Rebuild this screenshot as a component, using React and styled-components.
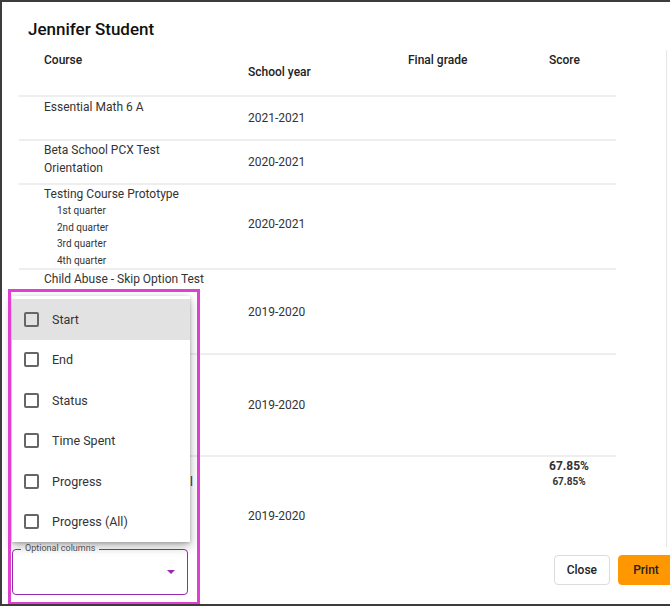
import React from "react";
import styled, { createGlobalStyle } from "styled-components";

const Global = createGlobalStyle`
  html, body { margin: 0; padding: 0; background: #fff; }
  * { box-sizing: border-box; }
  body { font-family: Roboto, "Liberation Sans", sans-serif; color: #222; }
`;

const Frame = styled.div`
  position: relative;
  width: 670px; height: 606px;
  border: 2px solid #3c3c3c;
  border-right: none;
  overflow: hidden;
  background: #fff;
  display: flex; flex-direction: column;
`;
const Title = styled.h2`
  margin: 15px 0 0 26px;
  font-size: 17px; font-weight: 500; height: 24px; line-height: 24px;
  color: #111;
`;
const Scroller = styled.div`
  flex: 1;
  margin-top: 9px;
  padding-left: 17px;
  border-right: 1px solid #e6e6e6;
  margin-right: 3px;
  overflow: hidden;
`;
const Row = styled.div`
  display: grid;
  grid-template-columns: 229px 160px 141px 67px;
  width: 597px;
  height: ${p => p.h}px;
  border-bottom: ${p => (p.last ? "none" : "2px solid #eeeeee")};
  font-size: 12px;
  color: #333;
`;
const Cell = styled.div`
  padding-left: ${p => (p.first ? 25 : 0)}px;
  padding-top: ${p => p.pt || 0}px;
  line-height: ${p => p.lh || 18}px;
  font-weight: ${p => (p.head ? 500 : 400)};
  color: ${p => (p.head ? "#222" : "#333")};
`;
const Sub = styled.div`
  font-size: 10px; line-height: 16.5px; padding-left: 13px;
`;
const Score = styled.div`
  font-weight: 700; font-size: ${p => p.s}px; line-height: 16px; text-align: center; width: 40px;
`;
const Footer = styled.div`
  height: 57px;
  display: flex; align-items: flex-start; justify-content: space-between;
  padding: 0 0 0 10px;
`;
const SelectBox = styled.div`
  position: relative;
  margin-top: 2px;
  width: 176px; height: 46px;
  border: 1.5px solid #9c27b0;
  border-radius: 4px;
`;
const SelectLabel = styled.span`
  position: absolute; top: -7px; left: 8px; padding: 0 4px; background: #fff;
  font-size: 9px; color: #555;
`;
const Arrow = styled.div`
  position: absolute; right: 12px; top: 20px;
  border-left: 4px solid transparent; border-right: 4px solid transparent;
  border-top: 4px solid #9c27b0;
`;
const Buttons = styled.div`
  display: flex; gap: 8px; margin-top: 8px; margin-right: -4px;
`;
const Button = styled.button`
  height: 30px; padding: 0 ${p => (p.primary ? 14 : 12)}px;
  font-family: Roboto, "Liberation Sans", sans-serif;
  font-size: 12px; font-weight: 500; color: #222;
  background: ${p => (p.primary ? "#ff9800" : "#fff")};
  border: 1px solid ${p => (p.primary ? "#ff9800" : "#dcdcdc")};
  border-radius: 4px;
  min-width: ${p => (p.primary ? 56 : 56)}px;
`;
const Highlight = styled.div`
  position: absolute; left: 6px; top: 287px; width: 192px; height: 316px;
  border: 3px solid #e040d0;
  pointer-events: none;
  z-index: 3;
`;
const Menu = styled.div`
  position: absolute; left: 10px; top: 294px; width: 178px; height: 246px;
  background: #fff;
  box-shadow: 0 4px 10px rgba(0,0,0,0.3), 0 1px 3px rgba(0,0,0,0.2);
  padding-top: 3px;
  z-index: 2;
`;
const Item = styled.div`
  height: 40.5px; display: flex; align-items: center; padding-left: 12px; gap: 13px;
  font-size: 12.5px; color: #333;
  background: ${p => (p.active ? "#e2e2e2" : "transparent")};
`;
const Box = styled.span`
  width: 15px; height: 15px; border: 2px solid #666; border-radius: 2px;
`;

const rows = [
  { h: 44, course: <Cell first pt={1}>Essential Math 6 A</Cell>, year: <Cell pt={12}>2021-2021</Cell> },
  { h: 44, course: <Cell first pt={0}>Beta School PCX Test<br />Orientation</Cell>, year: <Cell pt={12}>2020-2021</Cell> },
  {
    h: 85,
    course: (
      <Cell first pt={0}>
        Testing Course Prototype
        <Sub>1st quarter</Sub><Sub>2nd quarter</Sub><Sub>3rd quarter</Sub><Sub>4th quarter</Sub>
      </Cell>
    ),
    year: <Cell pt={30}>2020-2021</Cell>,
  },
  { h: 85, course: <Cell first pt={0}>Child Abuse - Skip Option Test</Cell>, year: <Cell pt={33}>2019-2020</Cell> },
  { h: 102, course: <Cell first />, year: <Cell pt={41}>2019-2020</Cell> },
  {
    h: 100, last: true,
    course: <Cell first pt={16}>Introduction to Ethics - Final</Cell>,
    year: <Cell pt={50}>2019-2020</Cell>,
    score: <Cell pt={1}><Score s={12}>67.85%</Score><Score s={10}>67.85%</Score></Cell>,
  },
];

const options = ["Start", "End", "Status", "Time Spent", "Progress", "Progress (All)"];

export default function App() {
  return (
    <>
      <Global />
      <Frame>
        <Title>Jennifer Student</Title>
        <Scroller>
          <Row h={47}>
            <Cell first head pt={1}>Course</Cell>
            <Cell head pt={13}>School year</Cell>
            <Cell head pt={1}>Final grade</Cell>
            <Cell head pt={1}>Score</Cell>
          </Row>
          {rows.map((r, i) => (
            <Row key={i} h={r.h} last={r.last}>
              {r.course}
              {r.year}
              <Cell />
              {r.score || <Cell />}
            </Row>
          ))}
        </Scroller>
        <Footer>
          <SelectBox>
            <SelectLabel>Optional columns</SelectLabel>
            <Arrow />
          </SelectBox>
          <Buttons>
            <Button>Close</Button>
            <Button primary>Print</Button>
          </Buttons>
        </Footer>
        <Menu>
          {options.map((o, i) => (
            <Item key={o} active={i === 0}><Box />{o}</Item>
          ))}
        </Menu>
        <Highlight />
      </Frame>
    </>
  );
}
